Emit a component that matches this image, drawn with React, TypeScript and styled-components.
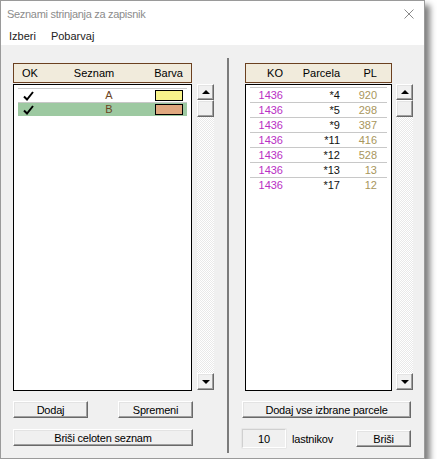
import React from 'react';
import styled, { createGlobalStyle } from 'styled-components';

const GlobalStyle = createGlobalStyle`
  html, body {
    margin: 0;
    padding: 0;
    background: #fff;
  }

  body {
    font-family: 'Liberation Sans', Arial, sans-serif;
    font-size: 11px;
    color: #000;
  }
`;

const Window = styled.div`
  box-sizing: border-box;
  width: 425px;
  height: 459px;
  display: flex;
  flex-direction: column;
  background: #f0f0f0;
  border: 1px solid #9a9a9a;
  box-shadow: 5px 5px 6px rgba(0, 0, 0, 0.5);
`;

const TitleBar = styled.div`
  height: 26px;
  display: flex;
  align-items: center;
  justify-content: space-between;
  padding: 0 10px 0 6px;
  background: #fff;
`;

const Title = styled.span`
  font-size: 11px;
  letter-spacing: -0.3px;
  color: #8c8c8c;
`;

const MenuBar = styled.div`
  height: 18px;
  display: flex;
  align-items: center;
  gap: 15px;
  padding-left: 8px;
  background: #fff;
  color: #222;
`;

const MenuItem = styled.span`
  font-size: 11px;
`;

const Content = styled.div`
  flex: 1;
  display: flex;
  padding: 13px 0 5px 12px;
`;

const Column = styled.div<{ $width: number }>`
  width: ${(p) => p.$width}px;
  display: flex;
  flex-direction: column;
  padding-top: 5px;
`;

const Separator = styled.div`
  width: 2px;
  margin: 0 13px 0 10px;
  background: #7c7c7c;
`;

const ListArea = styled.div<{ $gap: number; $inset?: number }>`
  display: flex;
  gap: ${(p) => p.$gap}px;
  margin-left: ${(p) => p.$inset || 0}px;
`;

const ListWrap = styled.div<{ $width: number }>`
  width: ${(p) => p.$width}px;
  display: flex;
  flex-direction: column;
`;

const Header = styled.div<{ $cols: string }>`
  box-sizing: border-box;
  height: 20px;
  margin-bottom: 1px;
  display: grid;
  grid-template-columns: ${(p) => p.$cols};
  align-items: center;
  background: #f1ebdc;
  border: 1px solid #6b4020;
`;

const HeadCell = styled.span<{ $align: string; $pad?: number }>`
  text-align: ${(p) => p.$align};
  padding-left: ${(p) => (p.$align === 'left' ? p.$pad || 0 : 0)}px;
  padding-right: ${(p) => (p.$align === 'right' ? p.$pad || 0 : 0)}px;
  white-space: nowrap;
`;

const ListBody = styled.div<{ $padTop: number }>`
  box-sizing: border-box;
  height: 307px;
  padding-top: ${(p) => p.$padTop}px;
  background: #fff;
  border: 1px solid #000;
`;

const SeznamRow = styled.div<{ $selected?: boolean }>`
  box-sizing: border-box;
  height: 14px;
  margin: 0 4px;
  display: flex;
  align-items: center;
  border-top: 1px solid #c8c8c8;
  background: ${(p) => (p.$selected ? '#9dc9a1' : 'transparent')};
`;

const CheckCell = styled.span`
  width: 40px;
  padding-left: 5px;
  display: flex;
  align-items: center;
`;

const LetterCell = styled.span`
  width: 92px;
  text-align: center;
  color: #6b4423;
  line-height: 13px;
`;

const Swatch = styled.span<{ $color: string }>`
  box-sizing: border-box;
  width: 28px;
  height: 11px;
  background: ${(p) => p.$color};
  border: 1px solid #000;
`;

const ParcelRow = styled.div`
  box-sizing: border-box;
  height: 15px;
  margin: 0 4px;
  display: grid;
  grid-template-columns: 33px 57px 37px;
  align-items: center;
  border-top: 1px solid #c8c8c8;
  line-height: 13px;
`;

const ParcelCell = styled.span<{ $color: string }>`
  text-align: right;
  color: ${(p) => p.$color};
`;

const ScrollBar = styled.div`
  box-sizing: border-box;
  width: 17px;
  height: 306px;
  margin-top: 21px;
  display: flex;
  flex-direction: column;
  justify-content: space-between;
  background-color: #fff;
  background-image: repeating-conic-gradient(#e9e9e9 0 25%, #fff 0 50%);
  background-size: 2px 2px;
`;

const ScrollTop = styled.div`
  display: flex;
  flex-direction: column;
`;

const RaisedBox = styled.div<{ $h: number }>`
  box-sizing: border-box;
  height: ${(p) => p.$h}px;
  display: flex;
  align-items: center;
  justify-content: center;
  background: #f0f0f0;
  border-top: 1px solid #fff;
  border-left: 1px solid #fff;
  border-right: 1px solid #696969;
  border-bottom: 1px solid #696969;
  box-shadow: inset -1px -1px #a0a0a0, inset 1px 1px #e3e3e3;
`;

const Arrow = styled.span<{ $down?: boolean }>`
  width: 0;
  height: 0;
  border-left: 4px solid transparent;
  border-right: 4px solid transparent;
  ${(p) => (p.$down ? 'border-top: 4px solid #000;' : 'border-bottom: 4px solid #000;')}
`;

const ButtonRow = styled.div<{ $width: number; $top: number }>`
  width: ${(p) => p.$width}px;
  margin-top: ${(p) => p.$top}px;
  display: flex;
  align-items: center;
  justify-content: space-between;
`;

const Button = styled.button<{ $width: number }>`
  box-sizing: border-box;
  width: ${(p) => p.$width}px;
  height: 17px;
  padding: 0;
  font-family: 'Liberation Sans', Arial, sans-serif;
  font-size: 11px;
  letter-spacing: -0.2px;
  color: #000;
  background: #f0f0f0;
  border-top: 1px solid #fff;
  border-left: 1px solid #fff;
  border-right: 1px solid #696969;
  border-bottom: 1px solid #696969;
  box-shadow: inset -1px -1px #a0a0a0, inset 1px 1px #e3e3e3;
`;

const CountField = styled.div`
  box-sizing: border-box;
  width: 44px;
  height: 19px;
  display: flex;
  align-items: center;
  justify-content: center;
  border-top: 1px solid #d0d0d0;
  border-left: 1px solid #d0d0d0;
  border-right: 1px solid #fff;
  border-bottom: 1px solid #fff;
  box-shadow: 0 0 0 0.5px #dedede;
`;

const Label = styled.span`
  margin-left: 6px;
  margin-right: auto;
  letter-spacing: -0.2px;
`;

const CheckMark = () => (
  <svg width="11" height="10" viewBox="0 0 11 10">
    <path d="M1 5.5 L4 8.5 L10 1" fill="none" stroke="#000" strokeWidth="2" />
  </svg>
);

const CloseIcon = () => (
  <svg width="10" height="10" viewBox="0 0 10 10">
    <path d="M0.5 0.5 L9.5 9.5 M9.5 0.5 L0.5 9.5" stroke="#8a8a8a" strokeWidth="1" />
  </svg>
);

const Scroll = () => (
  <ScrollBar>
    <ScrollTop>
      <RaisedBox $h={16}>
        <Arrow />
      </RaisedBox>
      <RaisedBox $h={17} />
    </ScrollTop>
    <RaisedBox $h={17}>
      <Arrow $down />
    </RaisedBox>
  </ScrollBar>
);

const seznami = [
  { letter: 'A', color: '#f8f38b', selected: false },
  { letter: 'B', color: '#e0a87f', selected: true },
];

const parcele = [
  { ko: '1436', parcela: '*4', pl: '920' },
  { ko: '1436', parcela: '*5', pl: '298' },
  { ko: '1436', parcela: '*9', pl: '387' },
  { ko: '1436', parcela: '*11', pl: '416' },
  { ko: '1436', parcela: '*12', pl: '528' },
  { ko: '1436', parcela: '*13', pl: '13' },
  { ko: '1436', parcela: '*17', pl: '12' },
];

const App: React.FC = () => {
  return (
    <>
      <GlobalStyle />
      <Window>
        <TitleBar>
          <Title>Seznami strinjanja za zapisnik</Title>
          <CloseIcon />
        </TitleBar>
        <MenuBar>
          <MenuItem>Izberi</MenuItem>
          <MenuItem>Pobarvaj</MenuItem>
        </MenuBar>
        <Content>
          <Column $width={204}>
            <ListArea $gap={5}>
              <ListWrap $width={179}>
                <Header $cols="50px 60px 1fr">
                  <HeadCell $align="left" $pad={8}>OK</HeadCell>
                  <HeadCell $align="center">Seznam</HeadCell>
                  <HeadCell $align="right" $pad={8}>Barva</HeadCell>
                </Header>
                <ListBody $padTop={3}>
                  {seznami.map((s) => (
                    <SeznamRow key={s.letter} $selected={s.selected}>
                      <CheckCell>
                        <CheckMark />
                      </CheckCell>
                      <LetterCell>{s.letter}</LetterCell>
                      <Swatch $color={s.color} />
                    </SeznamRow>
                  ))}
                </ListBody>
              </ListWrap>
              <Scroll />
            </ListArea>
            <ButtonRow $width={180} $top={10}>
              <Button $width={75}>Dodaj</Button>
              <Button $width={75}>Spremeni</Button>
            </ButtonRow>
            <ButtonRow $width={180} $top={11}>
              <Button $width={180}>Briši celoten seznam</Button>
            </ButtonRow>
          </Column>
          <Separator />
          <Column $width={171}>
            <ListArea $gap={4} $inset={3}>
              <ListWrap $width={147}>
                <Header $cols="37px 57px 37px">
                  <HeadCell $align="right">KO</HeadCell>
                  <HeadCell $align="right">Parcela</HeadCell>
                  <HeadCell $align="right">PL</HeadCell>
                </Header>
                <ListBody $padTop={2}>
                  {parcele.map((p) => (
                    <ParcelRow key={p.parcela}>
                      <ParcelCell $color="#b92fc4">{p.ko}</ParcelCell>
                      <ParcelCell $color="#111">{p.parcela}</ParcelCell>
                      <ParcelCell $color="#a8965c">{p.pl}</ParcelCell>
                    </ParcelRow>
                  ))}
                </ListBody>
              </ListWrap>
              <Scroll />
            </ListArea>
            <ButtonRow $width={169} $top={10}>
              <Button $width={169}>Dodaj vse izbrane parcele</Button>
            </ButtonRow>
            <ButtonRow $width={169} $top={11}>
              <CountField>10</CountField>
              <Label>lastnikov</Label>
              <Button $width={55}>Briši</Button>
            </ButtonRow>
          </Column>
        </Content>
      </Window>
    </>
  );
};

export default App;
